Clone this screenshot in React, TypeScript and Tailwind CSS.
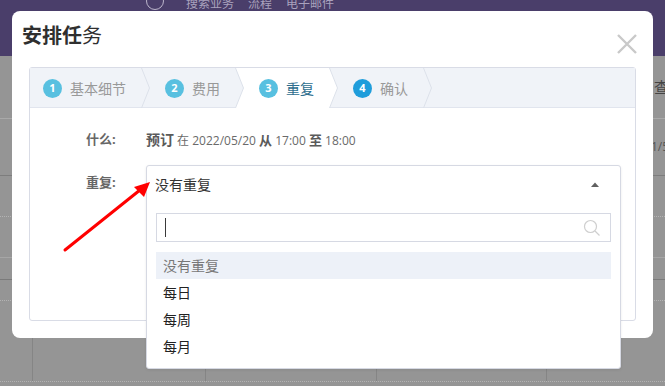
import React from "react";

const font = { fontFamily: '"Open Sans", "Noto Sans CJK SC", sans-serif' };

function Chevron({ fillLeft, fillRight }: { fillLeft?: boolean; fillRight?: boolean }) {
  return (
    <svg width="9" height="40" viewBox="0 0 9 40" className="shrink-0 block">
      {fillLeft && <polygon points="0,0 0.5,0 8.5,20 0.5,40 0,40" fill="#ffffff" />}
      {fillRight && <polygon points="0.5,0 9,0 9,40 0.5,40 8.5,20" fill="#ffffff" />}
      <polyline points="0.5,0 8.5,20 0.5,40" fill="none" stroke="#dde1ea" strokeWidth="1" />
    </svg>
  );
}

function Step({ n, label, active, dark }: { n: number; label: string; active?: boolean; dark?: boolean }) {
  return (
    <div className={`flex items-center gap-2 h-[40px] pl-[15px] pr-[15px] ${active ? "bg-white" : ""}`}>
      <span
        className={`w-[19px] h-[19px] rounded-full flex items-center justify-center text-white text-[11px] font-bold ${
          dark ? "bg-[#1f9ddb]" : "bg-[#58c0e0]"
        }`}
      >
        {n}
      </span>
      <span className={`text-[14px] ${active ? "text-[#2d6e8e]" : "text-[#999999]"}`}>{label}</span>
    </div>
  );
}

export default function App() {
  return (
    <div className="relative w-[665px] h-[386px] overflow-hidden bg-[#959595]" style={font}>
      {/* page behind */}
      <div className="h-[56px] bg-[#4a3e6a] relative">
        <div className="absolute left-[146px] top-[-8px] w-[18px] h-[18px] rounded-full border border-[#bdb6cc]" />
        <div className="absolute left-[186px] top-[-5px] flex gap-[14px] text-[12px] text-[#a9a2bd]">
          <span>搜索业务</span>
          <span>流程</span>
          <span>电子邮件</span>
        </div>
      </div>
      <div className="flex flex-col">
        <div className="h-[63px] border-b border-[#a9a9a9] flex items-center justify-end">
          <span className="text-[15px] text-[#444] -mr-[4px]">查</span>
        </div>
        <div className="h-[57px] border-b border-[#7d7d7d] flex items-center justify-end">
          <span className="text-[12px] text-[#555] -mr-[4px]">1/5</span>
        </div>
        <div className="h-[41px] border-b border-dotted border-[#b3b3b3]" />
        <div className="h-[41px] border-b border-[#a6a6a6]" />
        <div className="h-[22px] border-b border-[#7a7a7a]" />
        <div className="h-[21px] border-b border-dotted border-[#b3b3b3]" />
        <div className="h-[81px] border-b border-dotted border-[#b3b3b3] flex">
          <div className="w-[33px] border-r border-[#858585]" />
          <div className="w-[173px] border-r border-[#858585]" />
          <div className="w-[171px] border-r border-[#858585]" />
          <div className="w-[170px] border-r border-[#858585]" />
        </div>
      </div>

      {/* modal */}
      <div className="absolute left-[12px] top-[11px] w-[641px] h-[327px] bg-white rounded-[8px] flex flex-col">
        <div className="h-[56px] flex items-start justify-between pl-[10px] pr-[15px] pt-[11px]">
          <h1 className="text-[20px] text-[#2f2f2f] leading-[28px]">
            <span className="font-bold">安排任</span>
            <span>务</span>
          </h1>
          <svg width="22" height="22" viewBox="0 0 22 22" className="mt-[11px]">
            <path d="M2 2 L20 20 M20 2 L2 20" stroke="#c9c9c9" strokeWidth="2.4" />
          </svg>
        </div>

        <div className="mx-[17px] h-[254px] border border-[#d9dce6] rounded-[3px]">
          <div className="flex h-[40px] bg-[#f0f3f8] border-b border-[#e1e5ee]">
            <div className="-ml-[2px]">
              <Step n={1} label="基本细节" />
            </div>
            <Chevron />
            <Step n={2} label="费用" />
            <Chevron fillRight />
            <Step n={3} label="重复" active />
            <Chevron fillLeft />
            <Step n={4} label="确认" dark />
            <Chevron />
          </div>

          <div className="pt-[22px]">
            <div className="flex items-center h-[20px]">
              <div className="w-[116px] pl-[56px] text-[13px] font-bold text-[#666]">什么:</div>
              <div className="text-[12px] text-[#6a6a6a]">
                <span className="font-bold text-[14px] text-[#5a5a5a]">预订</span> 在 2022/05/20{" "}
                <span className="font-bold text-[13px] text-[#5a5a5a]">从</span> 17:00{" "}
                <span className="font-bold text-[13px] text-[#5a5a5a]">至</span> 18:00
              </div>
            </div>

            <div className="flex items-start mt-[15px]">
              <div className="w-[116px] pl-[56px] text-[13px] font-bold text-[#666] h-[36px] flex items-center">
                重复:
              </div>
              <div className="relative w-[475px] h-[38px]">
                <div className="absolute z-10 left-0 top-0 w-[475px] bg-white border border-[#d6d9e3] rounded-[3px] shadow-[0_1px_3px_rgba(0,0,0,0.08)] pb-[8px]">
                  <div className="h-[37px] flex items-center justify-between pl-[8px] pr-[21px]">
                    <span className="text-[14px] text-[#333]">没有重复</span>
                    <svg width="8" height="5" viewBox="0 0 8 5">
                      <polygon points="0,5 4,0.5 8,5" fill="#606060" />
                    </svg>
                  </div>
                  <div className="mx-[9px] mt-[10px] h-[29px] border border-[#d6d9e3] flex items-center justify-between pl-[8px] pr-[9px]">
                    <span className="w-[1px] h-[19px] bg-[#3a3a3a]" />
                    <svg width="18" height="18" viewBox="0 0 18 18">
                      <circle cx="7.5" cy="7.5" r="6" fill="none" stroke="#cfcfcf" strokeWidth="1.2" />
                      <path d="M12 12 L16.5 16.5" stroke="#cfcfcf" strokeWidth="1.3" />
                    </svg>
                  </div>
                  <div className="mt-[10px] mx-[9px] flex flex-col text-[14px]">
                    <div className="h-[27px] flex items-center pl-[7px] bg-[#edf1f8] text-[#777]">没有重复</div>
                    <div className="h-[27px] flex items-center pl-[7px] text-[#222]">每日</div>
                    <div className="h-[27px] flex items-center pl-[7px] text-[#222]">每周</div>
                    <div className="h-[27px] flex items-center pl-[7px] text-[#222]">每月</div>
                  </div>
                </div>
              </div>
            </div>
          </div>
        </div>
      </div>

      {/* red annotation arrow */}
      <svg className="absolute left-0 top-0 z-20 pointer-events-none" width="665" height="386" viewBox="0 0 665 386">
        <line x1="65" y1="250" x2="140" y2="190" stroke="#ff0000" strokeWidth="3" strokeLinecap="round" />
        <polygon points="150,182 134,187 144,197" fill="#ff0000" />
      </svg>
    </div>
  );
}
